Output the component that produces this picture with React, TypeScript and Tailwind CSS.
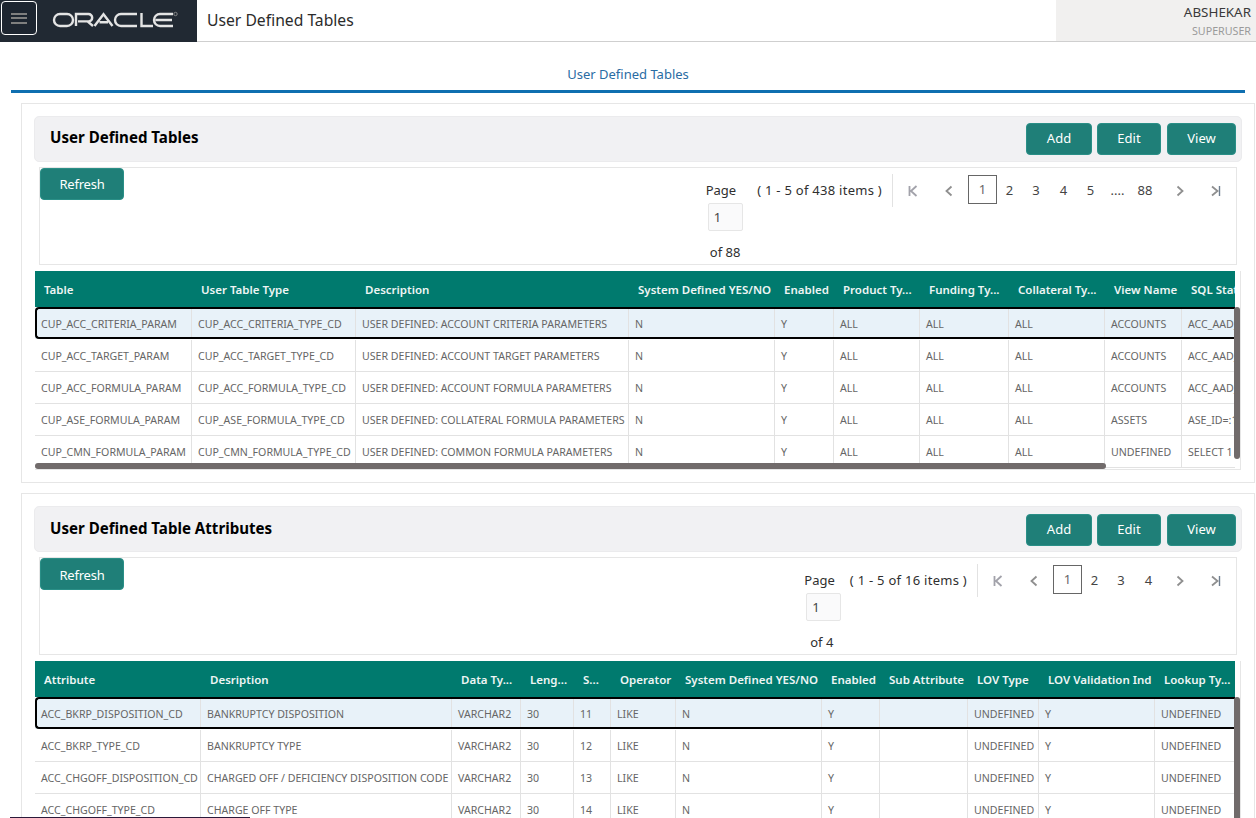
import React from "react";

const font = { fontFamily: '"Noto Sans", sans-serif' };

function Logo() {
  return (
    <svg width="128" height="18" viewBox="0 0 128 18" fill="none" stroke="#e4e4e4" strokeWidth="2.4" className="ml-[15px]">
      <rect x="2" y="3" width="19" height="12" rx="6" />
      <path d="M24 15V3H36.5a3.3 3.3 0 0 1 0 7.4H26M35.5 10.4L41 15" />
      <path d="M42.5 15L51.5 3.2L60.5 15M47.5 11.2H56" />
      <path d="M85 3H69a6 6 0 0 0 0 12H85" />
      <path d="M89.500 2V15H101" />
      <path d="M121 3H108a6 6 0 0 0 0 12H121M103.500 9H120" />
      <circle cx="123.500" cy="3" r="1.700" strokeWidth="0.800" stroke="#999" />
    </svg>
  );
}

function Header() {
  return (
    <div className="flex h-[42px] border-b border-[#cfcfcf]">
      <div className="flex h-[42px] w-[197px] items-start bg-[#212933]">
        <div className="ml-[1px] mt-[1px] flex h-[34px] w-[36px] flex-col items-center justify-center gap-[2.5px] rounded-[4px] border border-white bg-[#1d2530]">
          <div className="h-[2px] w-[16px] bg-[#7f7f7f]" />
          <div className="h-[2px] w-[16px] bg-[#7f7f7f]" />
          <div className="h-[2px] w-[16px] bg-[#7f7f7f]" />
        </div>
        <div className="mt-[11px]">
          <Logo />
        </div>
      </div>
      <div className="ml-[10px] flex flex-1 items-center text-[15.7px] text-[#2b2b2b]">User Defined Tables</div>
      <div className="flex w-[200px] flex-col items-end bg-[#f1f0ef] pr-[5px]">
        <div className="mt-[3px] text-[13.4px] leading-[18px] text-[#3a3a3a]">ABSHEKAR</div>
        <div className="mt-[3px] text-[10.7px] leading-[15px] text-[#9a9a9a]">SUPERUSER</div>
      </div>
    </div>
  );
}

function Btn({ label, className }: { label: string; className: string }) {
  return (
    <div className={`flex h-[32px] items-center justify-center rounded-[4px] border border-[#2a8f87] bg-[#1f7f78] text-[13px] text-white ${className}`}>
      {label}
    </div>
  );
}

function Num({ children, w }: { children: React.ReactNode; w: string }) {
  return <div className={`flex h-[30px] items-center justify-center pt-[2px] text-[13px] text-[#444] ${w}`}>{children}</div>;
}

function NavIcon({ d, w, stroke = "#8f8f8f", extra }: { d: string; w: string; stroke?: string; extra?: string }) {
  return (
    <div className={`flex h-[30px] items-center justify-center pt-[2px] ${w}`}>
      <svg width="12" height="12" viewBox="0 0 12 12" fill="none" stroke={stroke} strokeWidth="1.8">
        <path d={d} />
        {extra && <path d={extra} stroke="#6f7f90" strokeWidth="1.4" />}
      </svg>
    </div>
  );
}

function Pager({
  items,
  ofText,
  pages,
  infoGap,
  ofClass,
}: {
  items: string;
  ofText: string;
  pages: { t: string; w: string }[];
  infoGap: string;
  ofClass: string;
}) {
  return (
    <div className="ml-auto flex pt-[7px] text-[13px] text-[#2f2f2f]">
      <div className="flex flex-col">
        <div className="flex h-[30px] items-center pt-[2px]">
          <span>Page</span>
          <span className={`tracking-[0.27px] ${infoGap}`}>{items}</span>
        </div>
        <input
          readOnly
          value="1"
          className="ml-[2px] mt-[-2px] h-[28px] w-[35px] rounded-[2px] border border-[#e6e6e6] bg-[#fafafb] pl-[5px] text-[13px] text-[#444] outline-none"
        />
        <div className={`mt-[12px] w-[39px] whitespace-nowrap text-center leading-[18px] ${ofClass}`}>{ofText}</div>
      </div>
      <div className="ml-[10px] mt-[-1px] h-[33px] w-px bg-[#e2e2e2]" />
      <div className="ml-[2px] flex items-start">
        <NavIcon w="w-[36px]" stroke="#a2a2aa" d="M2.500 1V11M9.500 1L4 6L9.500 11" />
        <NavIcon w="w-[36px]" d="M8.500 1.500L3.500 6L8.500 10.500" />
        <div className="ml-[1px] flex h-[29px] w-[29px] items-center justify-center border border-[#666] pt-[1px] text-[13px] text-[#666]">1</div>
        {pages.map((p) => (
          <Num key={p.t} w={p.w}>{p.t}</Num>
        ))}
        <NavIcon w="w-[36px]" d="M3.500 1.500L8.500 6L3.500 10.500" />
        <NavIcon w="w-[36px]" d="M2 1.500L7.500 6L2 10.500" extra="M9.500 1V11" />
      </div>
    </div>
  );
}

function Table({
  columns,
  head,
  rows,
  hbar,
  vbarH,
}: {
  columns: string;
  head: string[];
  rows: string[][];
  hbar: boolean;
  vbarH: string;
}) {
  return (
    <div className="relative ml-[1px] mt-[6px] h-[199px] w-[1206px] border-r border-b border-[#e6e6e6]">
      <div className="h-full w-[1200px] overflow-hidden">
        <div className={`grid h-[36px] w-max items-center bg-[#007a6e] pt-[2px] text-[11.5px] font-semibold text-[#eef5f4] ${columns}`}>
          {head.map((h) => (
            <div key={h} className="whitespace-nowrap pl-[9px]">{h}</div>
          ))}
        </div>
        <div className="mt-px">
          {rows.map((r, i) => (
            <div
              key={r[0]}
              className={`relative grid h-[32px] w-max border-b text-[10.6px] text-[#666] ${columns} ${i === 0 ? "border-white bg-[#e8f2f9]" : "border-[#e2e2e2] bg-white"}`}
            >
              {r.map((c, j) => (
                <div key={j} className="flex items-center overflow-hidden whitespace-nowrap border-r border-[#e2e2e2] pl-[6px] pt-[2px]">
                  {c}
                </div>
              ))}
              {i === 0 && <div className="absolute left-0 right-0 top-[-1px] h-[32px] rounded-l-[4px] border-y-2 border-l-2 border-black" />}
            </div>
          ))}
        </div>
      </div>
      <div className={`absolute right-0 top-[36px] w-[6px] rounded-[3px] bg-[#716b6b] ${vbarH}`} />
      {hbar && <div className="absolute bottom-0 left-0 h-[6px] w-[1071px] rounded-[3px] bg-[#716b6b]" />}
    </div>
  );
}

function Section({
  title,
  className,
  titleClass,
  btnClass,
  refreshClass,
  pager,
  table,
}: {
  title: string;
  className: string;
  titleClass: string;
  btnClass: string;
  refreshClass: string;
  pager: React.ReactNode;
  table: React.ReactNode;
}) {
  return (
    <div className={`ml-[21px] w-[1234px] border border-[#e6e6e6] px-[12px] pt-[12px] ${className}`}>
      <div className="flex h-[46px] items-center rounded-[5px] border border-[#ebebed] bg-[#f1f1f3] pl-[15px] pr-[5px]">
        <div className={`text-[15.1px] font-bold text-black ${titleClass}`}>{title}</div>
        <Btn label="Add" className={`ml-auto w-[66px] ${btnClass}`} />
        <Btn label="Edit" className={`ml-[5px] w-[64px] ${btnClass}`} />
        <Btn label="View" className={`ml-[6px] w-[69px] ${btnClass}`} />
      </div>
      <div className="ml-[5px] mt-[5px] flex h-[98px] w-[1198px] items-start border border-[#e6e6e6] pr-[2px]">
        <Btn label="Refresh" className={`w-[84px] text-[12.5px] tracking-[-0.2px] ${refreshClass}`} />
        {pager}
      </div>
      {table}
    </div>
  );
}

const t1Cols = "grid-cols-[157px_164px_273px_146px_59px_86px_89px_96px_77px_200px]";
const t1Head = ["Table", "User Table Type", "Description", "System Defined YES/NO", "Enabled", "Product Ty...", "Funding Ty...", "Collateral Ty...", "View Name", "SQL Statement"];
const t1Rows = [
  ["CUP_ACC_CRITERIA_PARAM", "CUP_ACC_CRITERIA_TYPE_CD", "USER DEFINED: ACCOUNT CRITERIA PARAMETERS", "N", "Y", "ALL", "ALL", "ALL", "ACCOUNTS", "ACC_AAD_ID=:1"],
  ["CUP_ACC_TARGET_PARAM", "CUP_ACC_TARGET_TYPE_CD", "USER DEFINED: ACCOUNT TARGET PARAMETERS", "N", "Y", "ALL", "ALL", "ALL", "ACCOUNTS", "ACC_AAD_ID=:1"],
  ["CUP_ACC_FORMULA_PARAM", "CUP_ACC_FORMULA_TYPE_CD", "USER DEFINED: ACCOUNT FORMULA PARAMETERS", "N", "Y", "ALL", "ALL", "ALL", "ACCOUNTS", "ACC_AAD_ID=:1"],
  ["CUP_ASE_FORMULA_PARAM", "CUP_ASE_FORMULA_TYPE_CD", "USER DEFINED: COLLATERAL FORMULA PARAMETERS", "N", "Y", "ALL", "ALL", "ALL", "ASSETS", "ASE_ID=:1"],
  ["CUP_CMN_FORMULA_PARAM", "CUP_CMN_FORMULA_TYPE_CD", "USER DEFINED: COMMON FORMULA PARAMETERS", "N", "Y", "ALL", "ALL", "ALL", "UNDEFINED", "SELECT 1"],
];

const t2Cols = "grid-cols-[166px_251px_69px_53px_37px_65px_146px_58px_88px_71px_116px_80px]";
const t2Head = ["Attribute", "Desription", "Data Ty...", "Leng...", "S...", "Operator", "System Defined YES/NO", "Enabled", "Sub Attribute", "LOV Type", "LOV Validation Ind", "Lookup Ty..."];
const t2Rows = [
  ["ACC_BKRP_DISPOSITION_CD", "BANKRUPTCY DISPOSITION", "VARCHAR2", "30", "11", "LIKE", "N", "Y", "", "UNDEFINED", "Y", "UNDEFINED"],
  ["ACC_BKRP_TYPE_CD", "BANKRUPTCY TYPE", "VARCHAR2", "30", "12", "LIKE", "N", "Y", "", "UNDEFINED", "Y", "UNDEFINED"],
  ["ACC_CHGOFF_DISPOSITION_CD", "CHARGED OFF / DEFICIENCY DISPOSITION CODE", "VARCHAR2", "30", "13", "LIKE", "N", "Y", "", "UNDEFINED", "Y", "UNDEFINED"],
  ["ACC_CHGOFF_TYPE_CD", "CHARGE OFF TYPE", "VARCHAR2", "30", "14", "LIKE", "N", "Y", "", "UNDEFINED", "Y", "UNDEFINED"],
];

export default function App() {
  return (
    <div className="relative h-[818px] w-[1256px] overflow-hidden bg-white" style={font}>
      <Header />
      <div className="ml-[11px] flex h-[51px] w-[1234px] items-center justify-center border-b-[3px] border-[#0f6fb0] pt-[17px] text-[13px] text-[#2a6ca3]">
        User Defined Tables
      </div>
      <Section
        title="User Defined Tables"
        className="mt-[10px] h-[380px]"
        titleClass="pb-[4px]"
        btnClass=""
        refreshClass="pt-[2px]"
        pager={
          <Pager
            items="( 1 - 5 of 438 items )"
            ofText="of 88"
            infoGap="ml-[21px]"
            ofClass=""
            pages={[
              { t: "2", w: "w-[25px]" },
              { t: "3", w: "w-[28px]" },
              { t: "4", w: "w-[27px]" },
              { t: "5", w: "w-[27px]" },
              { t: "....", w: "w-[27px]" },
              { t: "88", w: "w-[28px]" },
              { t: "", w: "w-[3px]" },
            ]}
          />
        }
        table={<Table columns={t1Cols} head={t1Head} rows={t1Rows} hbar vbarH="h-[152px]" />}
      />
      <Section
        title="User Defined Table Attributes"
        className="mt-[10px] h-[380px]"
        titleClass="pb-[2px]"
        btnClass="mt-[2px]"
        refreshClass="pt-[4px]"
        pager={
          <Pager
            items="( 1 - 5 of 16 items )"
            ofText="of 4"
            infoGap="ml-[15px]"
            ofClass="ml-[-2px]"
            pages={[
              { t: "2", w: "w-[25px]" },
              { t: "3", w: "w-[28px]" },
              { t: "4", w: "w-[27px]" },
            ]}
          />
        }
        table={<Table columns={t2Cols} head={t2Head} rows={t2Rows} hbar={false} vbarH="h-[200px]" />}
      />
      <div className="absolute bottom-0 left-[10px] h-px w-[240px] bg-[#2b1a3a]" />
    </div>
  );
}
